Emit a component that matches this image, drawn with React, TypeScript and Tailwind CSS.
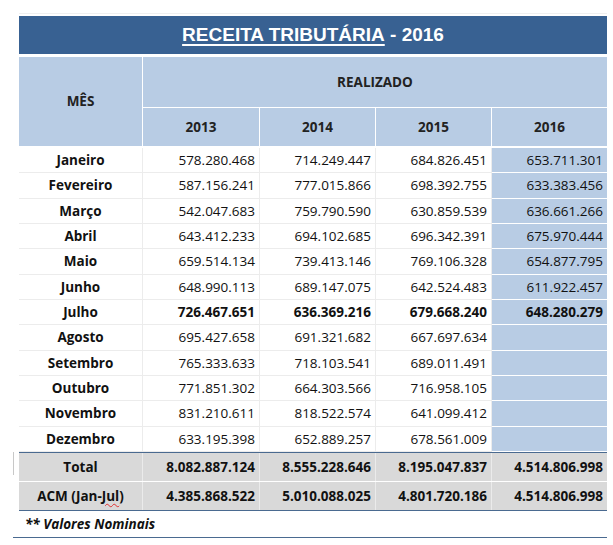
import React from 'react';

const rows = [
  { mes: 'Janeiro', v: ['578.280.468', '714.249.447', '684.826.451', '653.711.301'] },
  { mes: 'Fevereiro', v: ['587.156.241', '777.015.866', '698.392.755', '633.383.456'] },
  { mes: 'Março', v: ['542.047.683', '759.790.590', '630.859.539', '636.661.266'] },
  { mes: 'Abril', v: ['643.412.233', '694.102.685', '696.342.391', '675.970.444'] },
  { mes: 'Maio', v: ['659.514.134', '739.413.146', '769.106.328', '654.877.795'] },
  { mes: 'Junho', v: ['648.990.113', '689.147.075', '642.524.483', '611.922.457'] },
  { mes: 'Julho', v: ['726.467.651', '636.369.216', '679.668.240', '648.280.279'], bold: true },
  { mes: 'Agosto', v: ['695.427.658', '691.321.682', '667.697.634', ''] },
  { mes: 'Setembro', v: ['765.333.633', '718.103.541', '689.011.491', ''] },
  { mes: 'Outubro', v: ['771.851.302', '664.303.566', '716.958.105', ''] },
  { mes: 'Novembro', v: ['831.210.611', '818.522.574', '641.099.412', ''] },
  { mes: 'Dezembro', v: ['633.195.398', '652.889.257', '678.561.009', ''] },
];

const grid = 'grid grid-cols-[124px_117px_116px_116px_115px]';
const font = { fontFamily: '"Open Sans", "Liberation Sans", sans-serif' };

export default function App() {
  return (
    <div className="w-[613px] h-[545px] bg-white pt-[13px] pl-[13px] text-[13.5px] text-[#111]" style={font}>
      <div className="relative w-[594px] pl-[6px]">
        <div className="border-t border-[#f0f0f0] pt-[2px]">
          <div
            className="h-[38px] bg-[#386192] flex items-center justify-center text-white font-bold text-[19px]"
            style={{ fontFamily: '"Liberation Sans", Arial, sans-serif' }}
          >
            <span className="underline underline-offset-[3px] decoration-[1.5px]">RECEITA TRIBUTÁRIA</span>
            <span>&nbsp;- 2016</span>
          </div>
        </div>

        {/* header */}
        <div className={`${grid} mt-[3px] bg-[#b8cce4] font-bold text-[#222]`}>
          <div className="row-span-2 h-[89px] flex items-center justify-center border-r border-white">MÊS</div>
          <div className="col-span-4 h-[51px] flex items-center justify-center border-b border-white">REALIZADO</div>
          {['2013', '2014', '2015', '2016'].map((y, i) => (
            <div key={y} className={`h-[38px] flex items-center justify-center ${i < 3 ? 'border-r border-white' : ''}`}>
              {y}
            </div>
          ))}
        </div>

        {/* body */}
        <div className="mt-[2px]">
          {rows.map((r) => (
            <div key={r.mes} className={`${grid} h-[25.33px] ${r.bold ? 'font-bold' : ''}`}>
              <div className="flex items-center justify-center font-bold border-b border-r border-[#ececec]">{r.mes}</div>
              {r.v.map((n, i) => (
                <div
                  key={i}
                  className={`flex items-center justify-end pr-[4px] ${
                    i === 3 ? 'bg-[#b8cce4] border-b border-white' : 'border-b border-r border-[#ececec]'
                  }`}
                >
                  {n}
                </div>
              ))}
            </div>
          ))}
        </div>

        {/* totals */}
        <div className="border-t-[1.5px] border-b-[1.5px] border-[#4a6a90] bg-[#d9d9d9] font-bold">
          {[
            { label: 'Total', v: ['8.082.887.124', '8.555.228.646', '8.195.047.837', '4.514.806.998'], h: 'h-[28px]' },
            { label: 'ACM (Jan-Jul)', v: ['4.385.868.522', '5.010.088.025', '4.801.720.186', '4.514.806.998'], h: 'h-[29px] border-t border-white' },
          ].map((r) => (
            <div key={r.label} className={`${grid} ${r.h}`}>
              <div className="flex items-center justify-center border-r border-[#ebebeb]">
                {r.label === 'ACM (Jan-Jul)' ? (
                  <span>
                    ACM (Jan-
                    <span className="underline decoration-wavy decoration-[#e03030] decoration-[1px] underline-offset-[2px]">Jul</span>)
                  </span>
                ) : (
                  r.label
                )}
              </div>
              {r.v.map((n, i) => (
                <div key={i} className={`flex items-center justify-end pr-[4px] ${i < 3 ? 'border-r border-[#ebebeb]' : ''}`}>
                  {n}
                </div>
              ))}
            </div>
          ))}
        </div>
        <div className="absolute left-0 top-[439px] w-px h-[23px] bg-[#c8c8c8]" />

        <div className="h-[26px] flex items-center pl-[6px] font-bold italic">** Valores Nominais</div>
      </div>
      <div className="w-[594px] border-t-[1.5px] border-[#4a6a90]" />
    </div>
  );
}
